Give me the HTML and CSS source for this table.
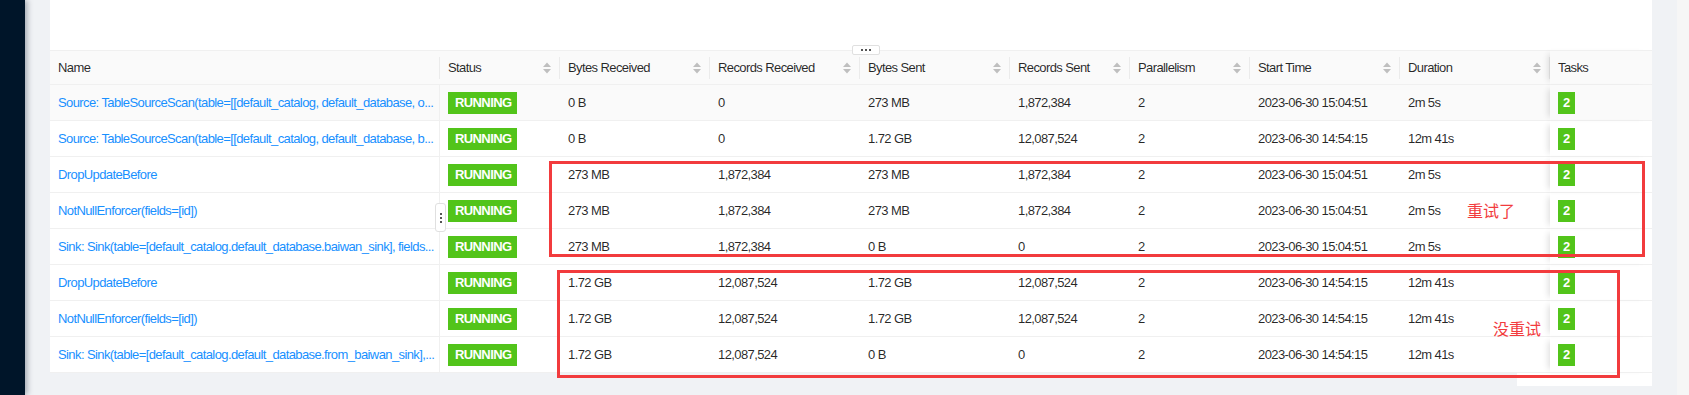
FILE: index.html
```html
<!DOCTYPE html>
<html lang="en">
<head>
    <meta charset="UTF-8">
    <title>Job Vertices</title>
    <link rel="stylesheet" href="styles.css">
</head>
<body>
    <div class="sider"></div>
    <div class="main">
        <div class="card">
            <div class="card-top"></div>
            <table class="vertex-table">
                <colgroup>
                    <col style="width: 390px">
                    <col style="width: 120px">
                    <col style="width: 150px">
                    <col style="width: 150px">
                    <col style="width: 150px">
                    <col style="width: 120px">
                    <col style="width: 120px">
                    <col style="width: 150px">
                    <col style="width: 150px">
                    <col style="width: 102px">
                </colgroup>
                <thead>
                    <tr>
                        <th class="name">Name</th>
                        <th><div class="th-inner">Status<svg class="sorter" viewBox="0 0 8 12"><path d="M0 5 L4 0.5 L8 5 Z M0 7 L8 7 L4 11.5 Z"/></svg></div></th>
                        <th><div class="th-inner">Bytes Received<svg class="sorter" viewBox="0 0 8 12"><path d="M0 5 L4 0.5 L8 5 Z M0 7 L8 7 L4 11.5 Z"/></svg></div></th>
                        <th><div class="th-inner">Records Received<svg class="sorter" viewBox="0 0 8 12"><path d="M0 5 L4 0.5 L8 5 Z M0 7 L8 7 L4 11.5 Z"/></svg></div></th>
                        <th><div class="th-inner">Bytes Sent<svg class="sorter" viewBox="0 0 8 12"><path d="M0 5 L4 0.5 L8 5 Z M0 7 L8 7 L4 11.5 Z"/></svg></div></th>
                        <th><div class="th-inner">Records Sent<svg class="sorter" viewBox="0 0 8 12"><path d="M0 5 L4 0.5 L8 5 Z M0 7 L8 7 L4 11.5 Z"/></svg></div></th>
                        <th><div class="th-inner">Parallelism<svg class="sorter" viewBox="0 0 8 12"><path d="M0 5 L4 0.5 L8 5 Z M0 7 L8 7 L4 11.5 Z"/></svg></div></th>
                        <th><div class="th-inner">Start Time<svg class="sorter" viewBox="0 0 8 12"><path d="M0 5 L4 0.5 L8 5 Z M0 7 L8 7 L4 11.5 Z"/></svg></div></th>
                        <th><div class="th-inner">Duration<svg class="sorter" viewBox="0 0 8 12"><path d="M0 5 L4 0.5 L8 5 Z M0 7 L8 7 L4 11.5 Z"/></svg></div></th>
                        <th class="tasks">Tasks</th>
                    </tr>
                </thead>
                <tbody>
                    <tr class="hover">
                        <td class="name"><a>Source: TableSourceScan(table=[[default_catalog, default_database, o...</a></td>
                        <td><span class="tag">RUNNING</span></td>
                        <td>0 B</td><td>0</td><td>273 MB</td><td>1,872,384</td><td>2</td>
                        <td>2023-06-30 15:04:51</td><td>2m 5s</td>
                        <td class="tasks"><span class="count">2</span></td>
                    </tr>
                    <tr>
                        <td class="name"><a>Source: TableSourceScan(table=[[default_catalog, default_database, b...</a></td>
                        <td><span class="tag">RUNNING</span></td>
                        <td>0 B</td><td>0</td><td>1.72 GB</td><td>12,087,524</td><td>2</td>
                        <td>2023-06-30 14:54:15</td><td>12m 41s</td>
                        <td class="tasks"><span class="count">2</span></td>
                    </tr>
                    <tr>
                        <td class="name"><a>DropUpdateBefore</a></td>
                        <td><span class="tag">RUNNING</span></td>
                        <td>273 MB</td><td>1,872,384</td><td>273 MB</td><td>1,872,384</td><td>2</td>
                        <td>2023-06-30 15:04:51</td><td>2m 5s</td>
                        <td class="tasks"><span class="count">2</span></td>
                    </tr>
                    <tr>
                        <td class="name"><a>NotNullEnforcer(fields=[id])</a></td>
                        <td><span class="tag">RUNNING</span></td>
                        <td>273 MB</td><td>1,872,384</td><td>273 MB</td><td>1,872,384</td><td>2</td>
                        <td>2023-06-30 15:04:51</td><td>2m 5s</td>
                        <td class="tasks"><span class="count">2</span></td>
                    </tr>
                    <tr>
                        <td class="name"><a>Sink: Sink(table=[default_catalog.default_database.baiwan_sink], fields...</a></td>
                        <td><span class="tag">RUNNING</span></td>
                        <td>273 MB</td><td>1,872,384</td><td>0 B</td><td>0</td><td>2</td>
                        <td>2023-06-30 15:04:51</td><td>2m 5s</td>
                        <td class="tasks"><span class="count">2</span></td>
                    </tr>
                    <tr>
                        <td class="name"><a>DropUpdateBefore</a></td>
                        <td><span class="tag">RUNNING</span></td>
                        <td>1.72 GB</td><td>12,087,524</td><td>1.72 GB</td><td>12,087,524</td><td>2</td>
                        <td>2023-06-30 14:54:15</td><td>12m 41s</td>
                        <td class="tasks"><span class="count">2</span></td>
                    </tr>
                    <tr>
                        <td class="name"><a>NotNullEnforcer(fields=[id])</a></td>
                        <td><span class="tag">RUNNING</span></td>
                        <td>1.72 GB</td><td>12,087,524</td><td>1.72 GB</td><td>12,087,524</td><td>2</td>
                        <td>2023-06-30 14:54:15</td><td>12m 41s</td>
                        <td class="tasks"><span class="count">2</span></td>
                    </tr>
                    <tr>
                        <td class="name"><a>Sink: Sink(table=[default_catalog.default_database.from_baiwan_sink],...</a></td>
                        <td><span class="tag">RUNNING</span></td>
                        <td>1.72 GB</td><td>12,087,524</td><td>0 B</td><td>0</td><td>2</td>
                        <td>2023-06-30 14:54:15</td><td>12m 41s</td>
                        <td class="tasks"><span class="count">2</span></td>
                    </tr>
                </tbody>
            </table>
            <div class="scroll-foot"></div>
        </div>
        <div class="gutter"></div>
        <div class="page-scroll"></div>
    </div>

    <!-- resize handles -->
    <div class="handle-h"><i></i><i></i><i></i></div>
    <div class="handle-v"><i></i><i></i><i></i></div>

    <!-- annotations -->
    <div class="mark mark-retry"></div>
    <div class="mark mark-noretry"></div>
    <span class="note note-retry">重试了</span>
    <span class="note note-noretry">没重试</span>
</body>
</html>
```

FILE: styles.css
```css
*,
*:before,
*:after {
    padding: 0;
    margin: 0;
    box-sizing: border-box;
}
body {
    position: relative;
    display: flex;
    width: 1689px;
    height: 395px;
    overflow: hidden;
    background-color: #f0f2f5;
    font-family: "Liberation Sans", Arial, sans-serif;
    font-size: 13px;
    letter-spacing: -0.6px;
    color: rgba(0, 0, 0, 0.85);
}
.sider {
    width: 25px;
    flex-shrink: 0;
    background-color: #001529;
    box-shadow: 2px 0 6px rgba(0, 21, 41, 0.35);
    z-index: 1;
}
.main {
    flex: 1;
    display: flex;
    padding-left: 25px;
}
.card {
    width: 1602px;
    display: flex;
    flex-direction: column;
}
.card-top {
    height: 50px;
    background-color: #ffffff;
}
.gutter {
    flex: 1;
}
.page-scroll {
    width: 12px;
    background-color: #f6f6f6;
}
.scroll-foot {
    align-self: flex-end;
    width: 135px;
    height: 13px;
    background-color: #ffffff;
}

/* table */
.vertex-table {
    width: 1602px;
    table-layout: fixed;
    border-collapse: separate;
    border-spacing: 0;
    background-color: #ffffff;
}
.vertex-table th {
    position: relative;
    height: 35px;
    padding: 0 8px;
    text-align: left;
    font-weight: normal;
    background-color: #fafafa;
    border-top: 1px solid #f0f0f0;
    border-bottom: 1px solid #f0f0f0;
    white-space: nowrap;
}
.vertex-table th:after {
    content: "";
    position: absolute;
    right: 0;
    top: 50%;
    width: 1px;
    height: 22px;
    transform: translateY(-50%);
    background-color: rgba(0, 0, 0, 0.06);
}
.vertex-table th.tasks:after {
    display: none;
}
.th-inner {
    display: flex;
    align-items: center;
    justify-content: space-between;
    padding-right: 1px;
}
.sorter {
    width: 8px;
    height: 12px;
    fill: #bfbfbf;
}
.vertex-table td {
    height: 36px;
    padding: 0 8px;
    border-bottom: 1px solid #f0f0f0;
    white-space: nowrap;
    overflow: hidden;
}
.vertex-table tr.hover td {
    background-color: #fafafa;
}
.vertex-table td.name {
    padding-right: 2px;
    border-right: 1px solid #f0f0f0;
}
.vertex-table td.name a {
    color: #1890ff;
}
.vertex-table .tasks {
    position: relative;
    overflow: visible;
    box-shadow: -6px 0 6px -4px rgba(0, 0, 0, 0.12);
}
.tag {
    display: inline-block;
    height: 22px;
    line-height: 22px;
    padding: 0 6px 0 7px;
    background-color: #52c41a;
    color: #ffffff;
    font-weight: bold;
    vertical-align: middle;
}
.count {
    display: inline-block;
    width: 17px;
    height: 22px;
    line-height: 22px;
    text-align: center;
    letter-spacing: 0;
    background-color: #52c41a;
    color: #ffffff;
    font-weight: bold;
    vertical-align: middle;
}

/* resize handles */
.handle-h {
    position: absolute;
    left: 852px;
    top: 45px;
    width: 28px;
    height: 10px;
    display: flex;
    justify-content: center;
    align-items: center;
    gap: 2px;
    background-color: #ffffff;
    border: 1px solid #e0e0e0;
    border-radius: 2px;
}
.handle-v {
    position: absolute;
    left: 435px;
    top: 203px;
    width: 11px;
    height: 29px;
    display: flex;
    flex-direction: column;
    justify-content: center;
    align-items: center;
    gap: 2px;
    background-color: #ffffff;
    border: 1px solid #e0e0e0;
    border-radius: 3px;
}
.handle-h i,
.handle-v i {
    display: block;
    width: 2px;
    height: 2px;
    background-color: #555555;
}

/* annotations */
.mark {
    position: absolute;
    border: 3px solid #f23b3d;
}
.mark-retry {
    left: 549px;
    top: 161px;
    width: 1096px;
    height: 96px;
}
.mark-noretry {
    left: 557px;
    top: 270px;
    width: 1063px;
    height: 108px;
}
.note {
    position: absolute;
    font-family: "Noto Sans CJK SC", sans-serif;
    font-size: 16px;
    line-height: 20px;
    letter-spacing: 0;
    color: #f23b3d;
}
.note-retry {
    left: 1467px;
    top: 200px;
}
.note-noretry {
    left: 1493px;
    top: 318px;
}
```
